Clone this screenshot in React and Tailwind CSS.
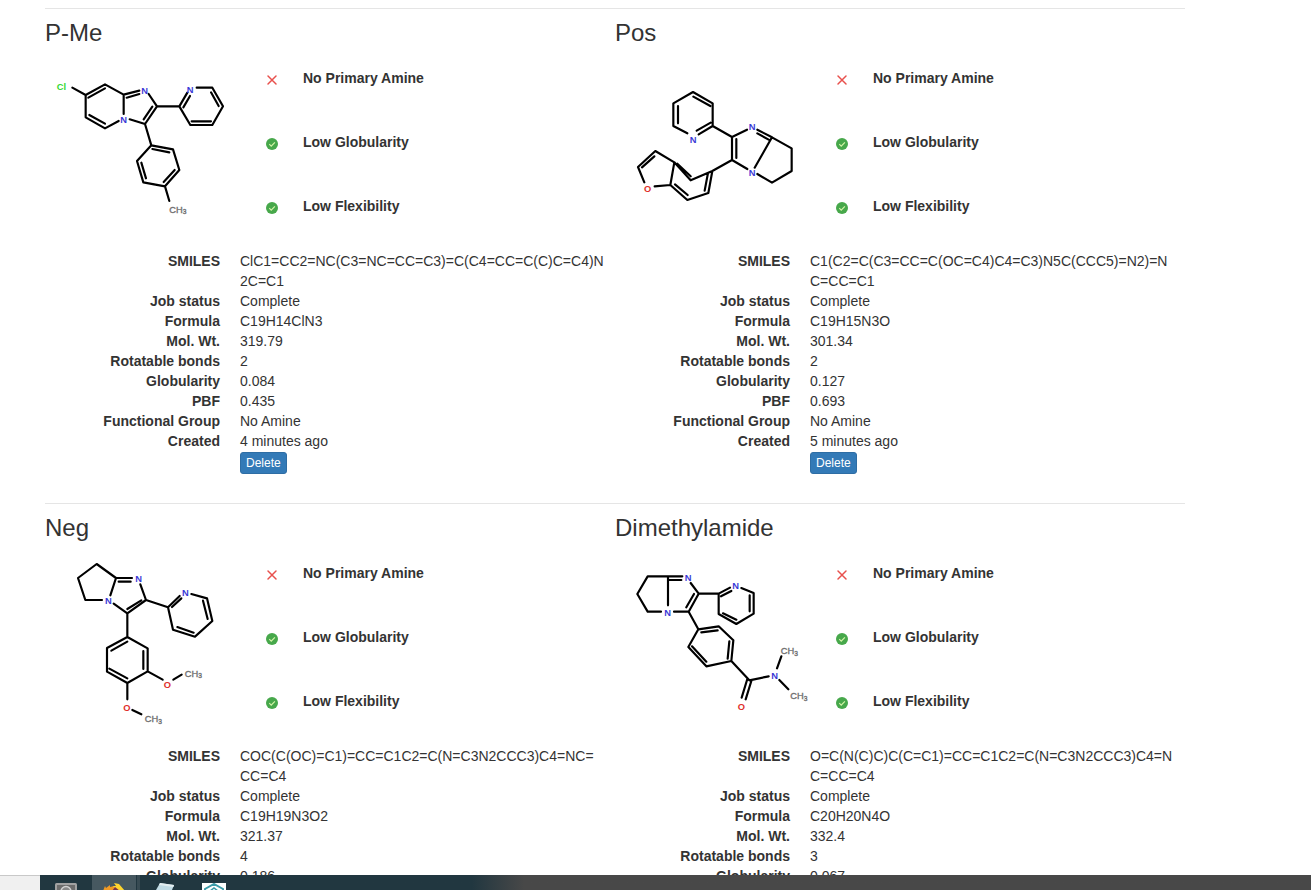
import React from "react";

const BLUE = "#3a39d6";
const RED = "#e0302a";
const GRAY = "#707070";

/* bonds: polyline path data; atoms: [x, y, label, colour] with (x, y) at the centre of the first letter */
const molecules = [
  {
    name: "P-Me",
    viewBox: "15 -12 600 510",
    bonds:
      "M97 83L137 105L195 73L251 104V162M137 105V172L195 205L236 183M145 113L195 85M148 165L195 191M251 104L298 92M260 113L298 102M326 102L351 139L315 192L269 178M337 140L311 178M351 139H418L442 98M418 139L451 195H517L549 139L517 83H470M430 142L450 108M455 184H513M536 138L513 97M315 192L334 256L399 268L418 330L375 379L310 367L291 303L334 256M337 267L388 277M404 330L371 366M318 355L304 308M375 379L388 423",
    atoms: [
      [64, 79, "Cl", "#35d935"],
      [314, 91, "N", BLUE],
      [251, 178, "N", BLUE],
      [450, 88, "N", BLUE],
      [398, 448, "CH3", GRAY],
    ],
    rows: [
      ["SMILES", "ClC1=CC2=NC(C3=NC=CC=C3)=C(C4=CC=C(C)C=C4)N\n2C=C1"],
      ["Job status", "Complete"],
      ["Formula", "C19H14ClN3"],
      ["Mol. Wt.", "319.79"],
      ["Rotatable bonds", "2"],
      ["Globularity", "0.084"],
      ["PBF", "0.435"],
      ["Functional Group", "No Amine"],
      ["Created", "4 minutes ago"],
    ],
  },
  {
    name: "Pos",
    viewBox: "-15 -42 600 510",
    bonds:
      "M202 190L160 168V100L219 66L278 100V168L236 193M174 160V108M220 80L271 108M272 158L230 182M278 168L336 201L381 179M336 201V270L382 297M349 207V264M412 179L456 202L404 293M412 190L450 211M456 202L515 235V303L456 338L412 312M336 270L277 303L212 331L163 277L106 243L54 291L73 337M103 259L66 292M163 277L151 345L104 349M151 345L202 390L265 369L277 303M165 343L203 375M254 362L264 309M172 281L212 319",
    atoms: [
      [219, 208, "N", BLUE],
      [396, 171, "N", BLUE],
      [396, 309, "N", BLUE],
      [83, 357, "O", RED],
    ],
    rows: [
      ["SMILES", "C1(C2=C(C3=CC=C(OC=C4)C4=C3)N5C(CCC5)=N2)=N\nC=CC=C1"],
      ["Job status", "Complete"],
      ["Formula", "C19H15N3O"],
      ["Mol. Wt.", "301.34"],
      ["Rotatable bonds", "2"],
      ["Globularity", "0.127"],
      ["PBF", "0.693"],
      ["Functional Group", "No Amine"],
      ["Created", "5 minutes ago"],
    ],
  },
  {
    name: "Neg",
    viewBox: "-45 3 600 510",
    bonds:
      "M126 150H76L54 84L110 42L168 84L151 136M168 84H216M176 95H212M241 103L258 150L202 190L161 161M244 151L202 177M258 150L324 172L359 138M324 172L339 239L405 260L457 213L441 145L394 132M336 171L364 145M352 231L401 248M443 207L429 152M202 190V261L263 295V364L202 399L141 365V294L202 261M202 275L154 302M250 303V357M202 385L148 356M263 364L308 389M340 389L365 374M202 399V448M217 480L244 493",
    atoms: [
      [236, 87, "N", BLUE],
      [145, 153, "N", BLUE],
      [376, 129, "N", BLUE],
      [322, 405, "O", RED],
      [201, 474, "O", RED],
      [384, 370, "CH3", GRAY],
      [264, 507, "CH3", GRAY],
    ],
    rows: [
      ["SMILES", "COC(C(OC)=C1)=CC=C1C2=C(N=C3N2CCC3)C4=NC=\nCC=C4"],
      ["Job status", "Complete"],
      ["Formula", "C19H19N3O2"],
      ["Mol. Wt.", "321.37"],
      ["Rotatable bonds", "4"],
      ["Globularity", "0.186"],
    ],
  },
  {
    name: "Dimethylamide",
    viewBox: "-15 -27 600 510",
    bonds:
      "M123 155H83L52 102L83 49H187M148 60H184M144 49V136M212 69L236 101L206 155H162M222 102L199 142M236 101H296L330 83M296 101V162L349 192L401 161V99L364 84M303 109L334 93M309 160L349 179M389 154V106M206 155L235 208L296 199L340 241L334 303L259 319L205 261L235 208M244 217L293 211M328 244L323 296M259 305L216 259M334 303L388 361L446 349M382 357L365 413M394 363L377 418M471 325L484 289M478 360L505 388",
    atoms: [
      [204, 54, "N", BLUE],
      [143, 159, "N", BLUE],
      [347, 76, "N", BLUE],
      [464, 348, "N", BLUE],
      [364, 441, "O", RED],
      [492, 273, "CH3", GRAY],
      [521, 408, "CH3", GRAY],
    ],
    rows: [
      ["SMILES", "O=C(N(C)C)C(C=C1)=CC=C1C2=C(N=C3N2CCC3)C4=N\nC=CC=C4"],
      ["Job status", "Complete"],
      ["Formula", "C20H20N4O"],
      ["Mol. Wt.", "332.4"],
      ["Rotatable bonds", "3"],
      ["Globularity", "0.067"],
    ],
  },
];

const checks = [
  ["No Primary Amine", false],
  ["Low Globularity", true],
  ["Low Flexibility", true],
];

function Structure({ molecule }) {
  return (
    <svg
      viewBox={molecule.viewBox}
      role="img"
      aria-label={`${molecule.name} structure`}
      className="mt-[10px] h-[170px] w-[200px] shrink-0 overflow-visible"
    >
      <path
        d={molecule.bonds}
        fill="none"
        stroke="#000"
        strokeWidth="6.5"
        strokeLinecap="round"
        strokeLinejoin="round"
      />
      {molecule.atoms.map(([x, y, label, color]) => (
        <text
          key={`${x}-${y}`}
          x={label === "CH3" ? x - 10 : x}
          y={y + 10}
          fill={color}
          fontSize="28"
          fontWeight={label === "CH3" ? 400 : 700}
          stroke={label === "CH3" ? color : "none"}
          strokeWidth="1"
          textAnchor={label === "CH3" ? "start" : "middle"}
        >
          {label === "CH3" ? (
            <>
              CH
              <tspan fontSize="20" dy="5">
                3
              </tspan>
            </>
          ) : (
            label
          )}
        </text>
      ))}
    </svg>
  );
}

function StatusIcon({ ok }) {
  return ok ? (
    <svg viewBox="0 0 12 12" className="mt-1 size-3" aria-hidden="true">
      <circle cx="6" cy="6" r="6" fill="#47a84b" />
      <path d="M3.3 6.2L5.2 8.1L8.9 4.3" fill="none" stroke="#d5f5a8" strokeWidth="1.2" />
    </svg>
  ) : (
    <svg viewBox="0 0 12 12" className="mt-1 size-3" aria-hidden="true">
      <path d="M2 2L10 10M10 2L2 10" stroke="#e8504c" strokeWidth="1.5" strokeLinecap="round" />
    </svg>
  );
}

function Molecule({ molecule }) {
  return (
    <article className="min-w-0">
      <h3 className="text-2xl leading-[26px]">{molecule.name}</h3>
      <div className="flex">
        <Structure molecule={molecule} />
        <ul className="ml-[21px]">
          {checks.map(([label, ok]) => (
            <li key={label} className="flex h-16 items-center gap-[25px] font-bold">
              <StatusIcon ok={ok} />
              {label}
            </li>
          ))}
        </ul>
      </div>
      <dl className="mt-[13px] mr-2 ml-[15px] grid grid-cols-[160px_1fr] gap-x-5">
        {molecule.rows.map(([term, value]) => (
          <React.Fragment key={term}>
            <dt className="text-right font-bold">{term}</dt>
            <dd className="break-all whitespace-pre-line">{value}</dd>
          </React.Fragment>
        ))}
        <dd className="col-start-2 pt-px">
          <button
            type="button"
            className="block h-[22px] rounded-[3px] border border-[#2e6da4] bg-[#337ab7] px-[5px] text-xs leading-5 text-white"
          >
            Delete
          </button>
        </dd>
      </dl>
    </article>
  );
}

function Taskbar() {
  return (
    <footer className="flex h-[15px] shrink-0 bg-linear-to-r from-[#213740] from-[36%] to-[#484848] to-[40%]">
      <div className="w-10 border-t border-[#c8c8c8] bg-[#f0f0f0]" />
      <div className="flex w-[52px] justify-center overflow-hidden">
        <svg viewBox="0 0 22 8" className="mt-2 h-2 w-[22px]" aria-hidden="true">
          <rect width="22" height="12" rx="1.5" fill="#a2a2a2" />
          <path d="M2 2H20V8H2Z" fill="#6c6c6c" />
          <circle cx="11" cy="8.5" r="5" fill="#888" stroke="#d2d2d2" strokeWidth="1.5" />
        </svg>
      </div>
      <div className="flex w-11 justify-center overflow-hidden bg-[#465860]">
        <svg viewBox="0 0 24 9" className="mt-[7px] h-[9px] w-6" aria-hidden="true">
          <path d="M1 9L3 4L4 6L8 3L8 5L12 4L13 9Z" fill="#f09a25" />
          <path d="M12 1L17 2L23 9H15L11 4L14 4Z" fill="#ffd52e" />
          <path d="M10 9L13 5L18 9Z" fill="#7b3448" />
        </svg>
      </div>
      <div className="w-1 border-l border-[#213740] bg-[#384b53]" />
      <div className="flex w-[52px] justify-center overflow-hidden">
        <svg viewBox="0 0 20 7" className="mt-2 h-[7px] w-5" aria-hidden="true">
          <path d="M4 0L18 2L16 7H0Z" fill="#c1dbe4" />
          <path d="M4 0L18 2L17.500 4L3 2Z" fill="#e4eef0" />
        </svg>
      </div>
      <div className="flex w-11 justify-center overflow-hidden">
        <svg viewBox="0 0 24 8" className="mt-2 h-2 w-6" aria-hidden="true">
          <rect width="24" height="8" fill="#fff" />
          <path d="M3 8V6L12 1L21 6V8" fill="none" stroke="#3b9ba8" strokeWidth="2" />
          <path d="M8 8L12 5L16 8" fill="none" stroke="#3b9ba8" strokeWidth="1.500" />
        </svg>
      </div>
    </footer>
  );
}

export default function App() {
  return (
    <div className="flex h-screen flex-col bg-white font-['Liberation_Sans',Arial,sans-serif] text-sm leading-5 text-[#333]">
      <main className="min-h-0 flex-1 overflow-hidden pt-2 pl-[45px]">
        {[0, 2].map((start) => (
          <section
            key={start}
            className="grid max-w-[1140px] grid-cols-2 border-t border-[#e5e5e5] pt-[11px] pb-[29px]"
          >
            {molecules.slice(start, start + 2).map((molecule) => (
              <Molecule key={molecule.name} molecule={molecule} />
            ))}
          </section>
        ))}
      </main>
      <Taskbar />
    </div>
  );
}
